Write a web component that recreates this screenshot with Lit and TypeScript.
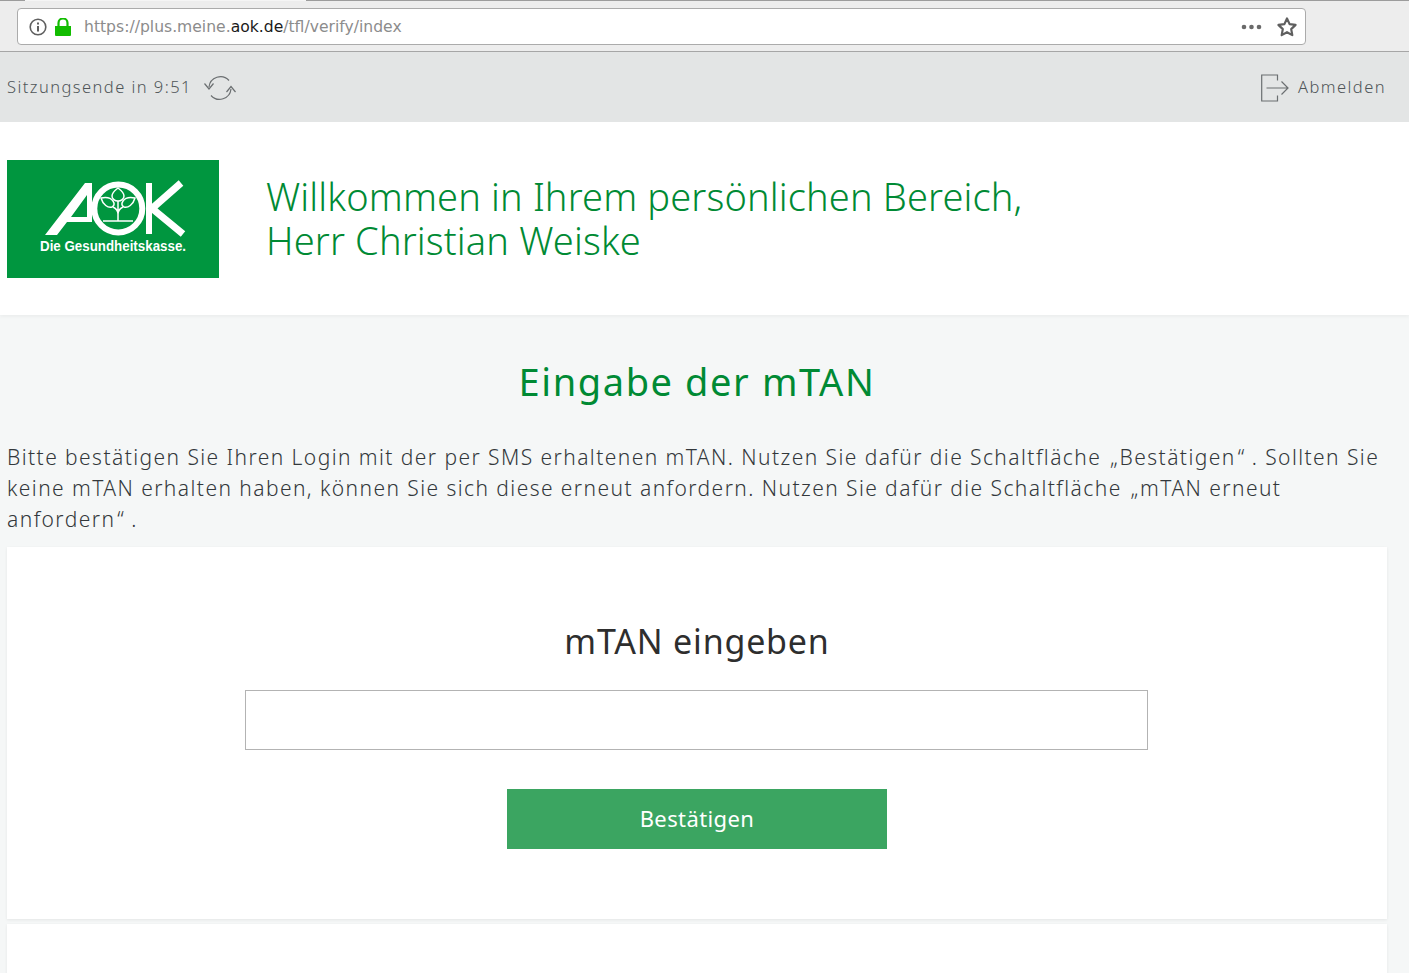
import { LitElement, html, css } from "lit";
import { customElement } from "lit/decorators.js";

@customElement("app-root")
export class AppRoot extends LitElement {
  static styles = css`
    :host { display: block; height: 973px; overflow: hidden; background: #f5f7f7; font-family: "Noto Sans", sans-serif; color: #33383b; }
    .chrome { height: 52px; box-sizing: border-box; background: #ededed; border-bottom: 1px solid #a6a6a6; display: flex; flex-direction: column; }
    .tabs { height: 1px; flex: none; display: flex; background: #9c9c9c; }
    .tabs i { display: block; margin-left: 25px; width: 281px; background: #f5f5f5; }
    .bar { padding: 7px 103px 0 17px; }
    .url { height: 37px; box-sizing: border-box; background: #fff; border: 1px solid #ababab; border-radius: 4px; display: flex; align-items: center; padding: 0 8px 0 10px; font-family: "DejaVu Sans", sans-serif; font-size: 15.6px; color: #8c8c8c; }
    .url svg { flex: none; display: block; }
    .lock { margin-left: 7px; }
    .addr { margin-left: 13px; flex: 1; }
    .addr b { font-weight: 400; color: #1a1a1a; }
    .dots { margin-right: 12px; }
    .session { height: 70px; background: #e3e5e5; display: flex; align-items: center; justify-content: space-between; padding: 2px 23px 0 7px; box-sizing: border-box; font-size: 16.5px; font-weight: 300; letter-spacing: 1.45px; color: #4f5558; }
    .group { display: flex; align-items: center; }
    .group span { padding-bottom: 3px; }
    .refresh { margin-left: 11px; }
    .leave { margin-left: 9px; }
    .welcome { height: 193px; box-sizing: border-box; background: #fff; padding-top: 38px; padding-left: 7px; display: flex; box-shadow: 0 2px 3px rgba(0,0,0,.04); position: relative; }
    .logo { width: 212px; height: 118px; flex: none; display: block; }
    h1 { margin: 14px 0 0 47px; font-size: 38px; line-height: 44px; font-weight: 300; letter-spacing: .15px; color: #008a34; }
    .content { padding: 0 22px 0 7px; }
    h2 { margin: 0; padding-top: 43px; text-align: center; font-size: 38px; line-height: 46px; font-weight: 400; letter-spacing: 1.6px; color: #008a34; }
    p { margin: 38px 0 0; font-size: 21px; line-height: 31px; font-weight: 300; letter-spacing: 1.43px; }
    .open { margin-left: 2px; }
    .close { margin: 0 6px 0 2px; }
    .card { background: #fff; box-shadow: 0 1px 3px rgba(0,0,0,.07); }
    .form { margin-top: 12px; height: 372px; display: flex; flex-direction: column; align-items: center; padding-top: 72px; box-sizing: border-box; }
    h3 { margin: 0; font-size: 34px; line-height: 44px; font-weight: 400; letter-spacing: .8px; color: #2e2e2e; }
    input { display: block; margin: 27px 1px 0 0; width: 903px; height: 60px; box-sizing: border-box; border: 1px solid #b3b3b3; background: #fff; padding: 0; }
    button { margin-top: 39px; width: 380px; height: 60px; border: 0; background: #3ba561; color: #fff; font: 400 22px "Noto Sans", sans-serif; letter-spacing: .4px; padding-bottom: 3px; }
    .next { margin-top: 5px; height: 60px; }
    .mark { fill: none; stroke: #fff; }
    .fillmark { fill: #fff; fill-rule: evenodd; }
    .tagline { fill: #fff; font-family: "Liberation Sans", sans-serif; font-weight: 700; font-size: 14.5px; }
  `;

  render() {
    return html`
      <div class="chrome">
        <div class="tabs"><i></i></div>
        <div class="bar">
        <div class="url">
          <svg width="20" height="20" viewBox="0 0 20 20"><circle cx="10" cy="10" r="7.8" fill="none" stroke="#5f5f5f" stroke-width="1.6"/><rect x="9" y="9" width="2" height="5.5" fill="#5f5f5f"/><rect x="9" y="5.5" width="2" height="2" fill="#5f5f5f"/></svg>
          <svg class="lock" width="16" height="18" viewBox="0 0 16 18"><path d="M0 8h16v9a1 1 0 0 1-1 1H1a1 1 0 0 1-1-1z" fill="#12bc00"/><path d="M3.500 9V5a4.500 4.500 0 0 1 9 0V9" fill="none" stroke="#12bc00" stroke-width="2.200"/></svg>
          <span class="addr">https://plus.meine.<b>aok.de</b>/tfl/verify/index</span>
          <svg class="dots" width="22" height="6" viewBox="0 0 22 6"><circle cx="3" cy="3" r="2.300" fill="#6a6a6a"/><circle cx="10.500" cy="3" r="2.300" fill="#6a6a6a"/><circle cx="18" cy="3" r="2.300" fill="#6a6a6a"/></svg>
          <svg width="22" height="22" viewBox="0 0 22 22"><path d="M12 2.500l2.600 5.600 6 .8-4.400 4.200 1.100 6L12 16.200l-5.300 2.900 1.100-6L3.400 8.900l6-.8z" fill="none" stroke="#5f5f5f" stroke-width="2.200" stroke-linejoin="round"/></svg>
        </div>
        </div>
      </div>
      <div class="session">
        <div class="group">
          <span>Sitzungsende in 9:51</span>
          <svg class="refresh" width="34" height="28" viewBox="0 0 34 28" fill="none" stroke="#6b6f71" stroke-width="1.200"><path d="M6 13a11.500 11.500 0 0 1 20-6.500"/><path d="M28 15a11.500 11.500 0 0 1-20 6.500"/><path d="M1.500 9.500L6 15l4.500-5.500"/><path d="M23.500 18L28 12.500l4.500 5.500"/></svg>
        </div>
        <div class="group">
          <svg width="28" height="28" viewBox="0 0 28 28" fill="none" stroke="#6b6f71" stroke-width="1.200"><path d="M16.500 6.500V1H.7v26h15.800v-5.500"/><path d="M5.500 14h21.500M20.500 7.500L27 14l-6.500 6.500"/></svg>
          <span class="leave">Abmelden</span>
        </div>
      </div>
      <div class="welcome">
        <svg class="logo" viewBox="0 0 212 118" role="img" aria-label="AOK Die Gesundheitskasse.">
          <rect width="212" height="118" fill="#00963f"/>
          <path class="fillmark" d="M38 75L78 23H85V62H60L50 75zM80 35V57H64z"/>
          <g class="mark">
            <circle cx="111.300" cy="48.500" r="24" stroke-width="6"/>
            <path d="M142 23v51" stroke-width="6"/>
            <path d="M174 23L145 48.500l31 25.500" stroke-width="7"/>
            <g stroke-width="1.500">
              <path d="M111 28c4 3 6 5 6 8s-3 5-6 5-6-2-6-5 2-5 6-8z"/>
              <path d="M94 38c5-1 10 0 12 3s1 5-1 6c-4 1-9-2-11-9z"/>
              <path d="M128 38c-5-1-10 0-12 3s-1 5 1 6c4 1 9-2 11-9z"/>
              <path d="M111 41v20M106 47c2 1 5 3 5 7M116 47c-2 1-5 3-5 7M96 61h30"/>
            </g>
          </g>
          <text class="tagline" x="33" y="91" textLength="146" lengthAdjust="spacingAndGlyphs">Die Gesundheitskasse.</text>
        </svg>
        <h1>Willkommen in Ihrem persönlichen Bereich,<br />Herr Christian Weiske</h1>
      </div>
      <div class="content">
        <h2>Eingabe der mTAN</h2>
        <p>Bitte bestätigen Sie Ihren Login mit der per SMS erhaltenen mTAN. Nutzen Sie dafür die Schaltfläche <span class="open">„</span>Bestätigen<span class="close">“</span>. Sollten Sie keine mTAN erhalten haben, können Sie sich diese erneut anfordern. Nutzen Sie dafür die Schaltfläche <span class="open">„</span>mTAN erneut anfordern<span class="close">“</span>.</p>
        <div class="card form">
          <h3>mTAN eingeben</h3>
          <input type="text" />
          <button>Bestätigen</button>
        </div>
        <div class="card next"></div>
      </div>
    `;
  }
}
